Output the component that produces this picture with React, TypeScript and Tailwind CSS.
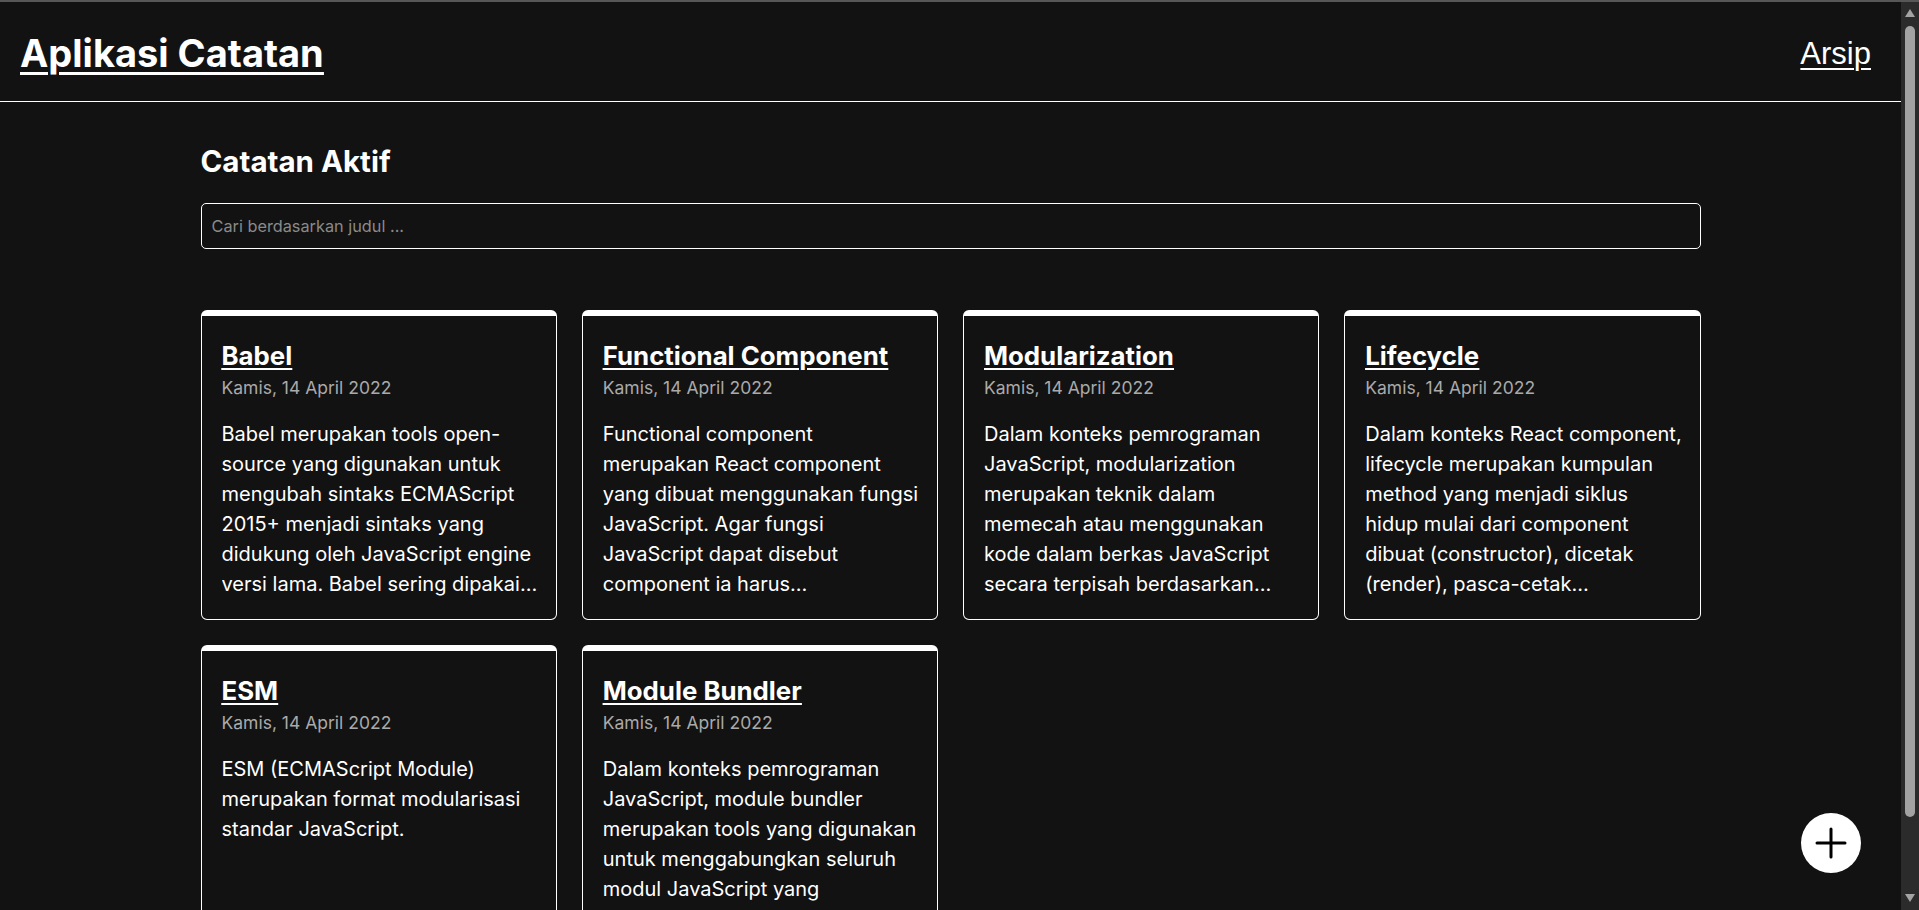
import React from "react";

type Note = { id: number; title: string; date: string; body: string };

const notes: Note[] = [
  {
    id: 1,
    title: "Babel",
    date: "Kamis, 14 April 2022",
    body: "Babel merupakan tools open-source yang digunakan untuk mengubah sintaks ECMAScript 2015+ menjadi sintaks yang didukung oleh JavaScript engine versi lama. Babel sering dipakai ketika kita menggunakan sintaks terbaru termasuk sintaks JSX.",
  },
  {
    id: 2,
    title: "Functional Component",
    date: "Kamis, 14 April 2022",
    body: "Functional component merupakan React component yang dibuat menggunakan fungsi JavaScript. Agar fungsi JavaScript dapat disebut component ia harus mengembalikan React element dan dipanggil layaknya React component.",
  },
  {
    id: 3,
    title: "Modularization",
    date: "Kamis, 14 April 2022",
    body: "Dalam konteks pemrograman JavaScript, modularization merupakan teknik dalam memecah atau menggunakan kode dalam berkas JavaScript secara terpisah berdasarkan tanggung jawabnya masing-masing.",
  },
  {
    id: 4,
    title: "Lifecycle",
    date: "Kamis, 14 April 2022",
    body: "Dalam konteks React component, lifecycle merupakan kumpulan method yang menjadi siklus hidup mulai dari component dibuat (constructor), dicetak (render), pasca-cetak (componentDidMount), dan sebagainya.",
  },
  {
    id: 5,
    title: "ESM",
    date: "Kamis, 14 April 2022",
    body: "ESM (ECMAScript Module) merupakan format modularisasi standar JavaScript.",
  },
  {
    id: 6,
    title: "Module Bundler",
    date: "Kamis, 14 April 2022",
    body: "Dalam konteks pemrograman JavaScript, module bundler merupakan tools yang digunakan untuk menggabungkan seluruh modul JavaScript yang digunakan oleh aplikasi menjadi satu berkas.",
  },
];

function NoteCard({ note }: { note: Note }) {
  return (
    <article className="rounded-md border border-t-[6px] border-white pt-[24px] pr-4 pb-5 pl-5">
      <h3 className="text-[25.8px] font-bold leading-8 text-white underline decoration-2 underline-offset-[3px]">
        <a href="#">{note.title}</a>
      </h3>
      <p className="mt-[4px] text-[17.5px] leading-6 text-[#aaaaaa]">{note.date}</p>
      <p className="mt-[19px] line-clamp-6 text-[20px] leading-[30px] text-white">{note.body}</p>
    </article>
  );
}

function FakeScrollbar() {
  return (
    <div className="flex w-[18px] shrink-0 flex-col items-center bg-[#2b2b2b]">
      <svg width="12" height="24" viewBox="0 0 12 24" className="shrink-0">
        <path d="M1 15 L6 7 L11 15 Z" fill="#a3a3a3" />
      </svg>
      <div className="h-[791px] w-[10px] shrink-0 rounded-full bg-[#a3a3a3]" />
      <div className="flex-1" />
      <svg width="12" height="20" viewBox="0 0 12 20" className="shrink-0">
        <path d="M1 4 L11 4 L6 12 Z" fill="#a3a3a3" />
      </svg>
    </div>
  );
}

export default function App() {
  return (
    <div
      className="flex h-screen flex-col overflow-hidden border-t-2 border-[#575757] bg-[#121212] text-white"
      style={{ fontFamily: "Inter, 'Noto Sans', sans-serif" }}
    >
      <div className="flex min-h-0 flex-1">
        <div className="min-w-0 flex-1 overflow-hidden">
          <header className="flex h-[100px] items-center justify-between border-b border-white pl-5 pr-[30px]">
            <h1 className="pt-[2px] text-[38px] font-bold leading-[46px] underline decoration-[3px] underline-offset-[5px]">
              <a href="#">Aplikasi Catatan</a>
            </h1>
            <nav className="pt-[5px]">
              <a
                href="#"
                className="text-[31px] underline decoration-2 underline-offset-[4px]"
                style={{ fontFamily: "'Liberation Sans', Arial, sans-serif" }}
              >
                Arsip
              </a>
            </nav>
          </header>

          <main className="mx-auto max-w-[1500px] pt-[42px] pb-10">
            <h2 className="text-[29.5px] font-bold leading-[35px]">Catatan Aktif</h2>
            <div className="mt-[24px]">
              <input
                type="text"
                placeholder="Cari berdasarkan judul ..."
                className="h-[46px] w-full rounded-[5px] border border-white bg-transparent px-[10px] text-[16.3px] text-white placeholder:text-[#8a8a8a] outline-none"
              />
            </div>
            <section className="mt-[61px] grid grid-cols-4 gap-[25px]">
              {notes.map((n) => (
                <NoteCard key={n.id} note={n} />
              ))}
            </section>
          </main>
        </div>
        <FakeScrollbar />
      </div>

      <button
        type="button"
        aria-label="Tambah"
        className="fixed right-[58px] bottom-[37px] flex h-[60px] w-[60px] items-center justify-center rounded-full bg-white"
      >
        <svg width="32" height="32" viewBox="0 0 32 32" fill="none" stroke="#000" strokeWidth="3" strokeLinecap="round">
          <path d="M16 2v28M2 16h28" />
        </svg>
      </button>
    </div>
  );
}
